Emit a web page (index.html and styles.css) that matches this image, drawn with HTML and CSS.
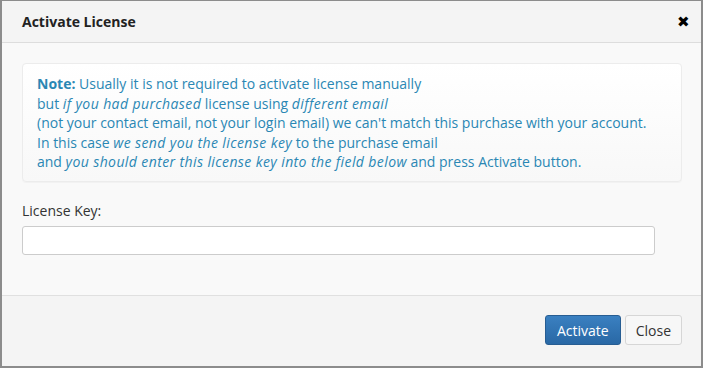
FILE: index.html
```html
<!DOCTYPE html>
<html>
<head>
<meta charset="utf-8">
<link rel="stylesheet" href="styles.css">
</head>
<body>
<div class="modal">
  <div class="modal-header">
    <h3 class="title">Activate License</h3>
    <span class="close-x">&#x2716;</span>
  </div>
  <div class="modal-body">
    <div class="note">
      <b>Note:</b> Usually it is not required to activate license manually<br>
      but <i>if you had purchased</i> license using <i>different email</i><br>
      (not your contact email, not your login email) we can't match this purchase with your account.<br>
      In this case <i>we send you the license key</i> to the purchase email<br>
      and <i>you should enter this license key into the field below</i> and press Activate button.
    </div>
    <label class="label">License Key:</label>
    <input class="input" type="text">
  </div>
  <div class="modal-footer">
    <button class="btn btn-primary">Activate</button>
    <button class="btn">Close</button>
  </div>
</div>
</body>
</html>
```
FILE: styles.css
```css
html, body {
  margin: 0;
  padding: 0;
  background: #8c8c8c;
  font-family: "Open Sans", "Liberation Sans", sans-serif;
}
.modal {
  margin: 1px 2px 2px 2px;
  width: 699px;
  height: 365px;
  background: #f9f9f9;
  display: flex;
  flex-direction: column;
  box-sizing: border-box;
}
.modal-header {
  height: 42px;
  box-sizing: border-box;
  background: #f4f4f4;
  border-bottom: 1px solid #dddddd;
  display: flex;
  align-items: center;
  justify-content: space-between;
  padding: 0 11px 0 20px;
}
.title {
  margin: 0;
  font-size: 14px;
  font-weight: 700;
  color: #222;
}
.close-x {
  font-size: 15px;
  color: #000;
  line-height: 1;
}
.modal-body {
  flex: 1;
  padding: 20px 19px 0 20px;
  display: flex;
  flex-direction: column;
  border-bottom: 1px solid #e0e0e0;
}
.note {
  background: linear-gradient(#ffffff, #f8f8f8);
  border: 1px solid #ececec;
  border-radius: 4px;
  padding: 10px 14px 9px 14px;
  color: #2a87b4;
  font-size: 14px;
  line-height: 19.6px;
  box-shadow: 0 1px 1px rgba(0,0,0,0.03);
}
.note b { font-weight: 700; }
.note i { letter-spacing: 0.4px; }
.label {
  margin-top: 19px;
  font-size: 14px;
  color: #333;
}
.input {
  margin-top: 6px;
  width: 633px;
  height: 29px;
  box-sizing: border-box;
  border: 1px solid #cccccc;
  border-radius: 3px;
  background: #fff;
}
.modal-footer {
  height: 70px;
  box-sizing: border-box;
  background: #f4f4f4;
  display: flex;
  justify-content: flex-end;
  align-items: center;
  gap: 4px;
  padding: 0 19px 2px 0;
}
.btn {
  height: 30px;
  padding: 0 10px;
  font-family: "Open Sans", "Liberation Sans", sans-serif;
  font-size: 14px;
  color: #333;
  background: #f7f7f7;
  border: 1px solid #d6d6d6;
  border-radius: 3px;
}
.btn-primary {
  padding: 0 11px;
  color: #fff;
  background: linear-gradient(#3a80c1, #2968a5);
  border-color: #275d92;
}
```
